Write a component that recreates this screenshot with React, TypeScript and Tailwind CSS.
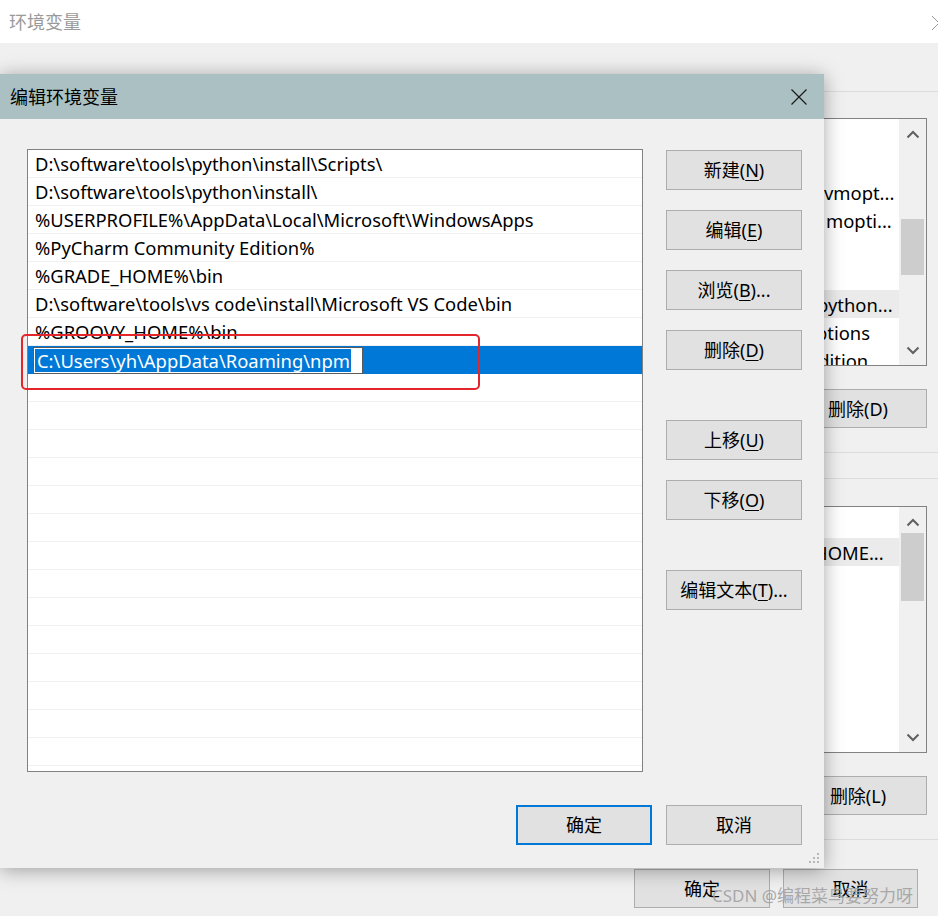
import React from 'react';

const PATHS = [
  'D:\\software\\tools\\python\\install\\Scripts\\',
  'D:\\software\\tools\\python\\install\\',
  '%USERPROFILE%\\AppData\\Local\\Microsoft\\WindowsApps',
  '%PyCharm Community Edition%',
  '%GRADE_HOME%\\bin',
  'D:\\software\\tools\\vs code\\install\\Microsoft VS Code\\bin',
  '%GROOVY_HOME%\\bin',
];
const SELECTED = 'C:\\Users\\yh\\AppData\\Roaming\\npm';

// fragments of the background window's list that peek out beside the dialog
const BG_ROWS_1: { text: string; pad: number; hl?: boolean }[] = [
  { text: '', pad: 0 },
  { text: '', pad: 0 },
  { text: 'vmopt...', pad: 223 },
  { text: 'mopti...', pad: 225 },
  { text: '', pad: 0 },
  { text: '', pad: 0 },
  { text: 'python...', pad: 216, hl: true },
  { text: 'ptions', pad: 215 },
  { text: 'Edition', pad: 207 },
];
const BG_ROWS_2: { text: string; pad: number; hl?: boolean }[] = [
  { text: '', pad: 0 },
  { text: 'HOME...', pad: 213, hl: true },
];

function Chevron({ down }: { down?: boolean }) {
  return (
    <svg width="14" height="9" viewBox="0 0 14 9" className={down ? 'rotate-180' : ''}>
      <path d="M1.5 7.5 L7 2 L12.5 7.5" fill="none" stroke="#606060" strokeWidth="2" />
    </svg>
  );
}

function ScrollBar({ thumbTop, thumbHeight }: { thumbTop: number; thumbHeight: number }) {
  return (
    <div className="w-[27px] shrink-0 bg-[#f0f0f0] flex flex-col">
      <div className="h-[30px] flex items-center justify-center">
        <Chevron />
      </div>
      <div className="flex-1 px-[2px]">
        <div className="bg-[#cdcdcd]" style={{ marginTop: thumbTop, height: thumbHeight }} />
      </div>
      <div className="h-[30px] flex items-center justify-center">
        <Chevron down />
      </div>
    </div>
  );
}

function BgList({ rows, top, height, thumbTop, thumbHeight }: {
  rows: { text: string; pad: number; hl?: boolean }[];
  top: number; height: number; thumbTop: number; thumbHeight: number;
}) {
  return (
    <div className="ml-[600px] mr-[11px] border border-[#828282] bg-white flex" style={{ marginTop: top, height }}>
      <div className="flex-1 pt-[3px] overflow-hidden">
        {rows.map((r, i) => (
          <div
            key={i}
            className={`h-[28px] flex items-center pt-[2px] whitespace-nowrap text-[18.4px] text-black ${r.hl ? 'bg-[#ebebeb]' : ''}`}
            style={{ paddingLeft: r.pad }}
          >
            {r.text}
          </div>
        ))}
      </div>
      <ScrollBar thumbTop={thumbTop} thumbHeight={thumbHeight} />
    </div>
  );
}

function BgButton({ label, className = '' }: { label: string; className?: string }) {
  return (
    <div className={`h-[39px] bg-[#e1e1e1] border border-[#adadad] flex items-center justify-center text-[18px] text-black ${className}`}>
      {label}
    </div>
  );
}

function BackgroundWindow() {
  return (
    <div className="flex flex-col">
      <div className="h-[43px] bg-white flex items-center justify-between pl-[9px]">
        <span className="text-[18px] text-[#9a9a9a]">环境变量</span>
        <svg width="16" height="16" viewBox="0 0 16 16" className="-mr-[9px] mt-[2px]">
          <path d="M1 1 L15 15 M15 1 L1 15" stroke="#9a9a9a" strokeWidth="1" fill="none" />
        </svg>
      </div>
      <div className="mt-[48px] h-px bg-[#dcdcdc]" />
      <BgList rows={BG_ROWS_1} top={26} height={248} thumbTop={70} thumbHeight={56} />
      <div className="flex justify-end mr-[11px] mt-[23px]">
        <BgButton label="删除(D)" className="w-[138px]" />
      </div>
      <div className="mt-[24px] h-px bg-[#dcdcdc]" />
      <div className="mt-[25px] h-px bg-[#dcdcdc]" />
      <BgList rows={BG_ROWS_2} top={27} height={247} thumbTop={-4} thumbHeight={68} />
      <div className="flex justify-end mr-[11px] mt-[23px]">
        <BgButton label="删除(L)" className="w-[138px]" />
      </div>
      <div className="mt-[24px] h-px bg-[#dcdcdc]" />
      <div className="flex justify-end gap-[13px] pr-[20px] mt-[29px]">
        <BgButton label="确定" className="w-[136px] h-[37px]" />
        <BgButton label="取消" className="w-[135px] h-[37px]" />
      </div>
    </div>
  );
}

function DlgButton({ label, keyChar, suffix = '', className = '', primary }: {
  label: string; keyChar?: string; suffix?: string; className?: string; primary?: boolean;
}) {
  return (
    <button
      className={`w-[136px] h-[40px] bg-[#e1e1e1] flex items-center justify-center text-[18px] text-black ${primary ? 'border-2 border-[#0078d7]' : 'border border-[#adadad]'} ${className}`}
    >
      {label}
      {keyChar && (
        <>
          (<span className="underline underline-offset-[3px] decoration-1">{keyChar}</span>){suffix}
        </>
      )}
    </button>
  );
}

function EditDialog() {
  const empty = Array.from({ length: 15 });
  return (
    <div className="absolute left-0 top-[74px] w-[824px] h-[794px] bg-[#f0f0f0] shadow-[0_2px_18px_rgba(0,0,0,0.35)] flex flex-col">
      <div className="h-[45px] bg-[#abc0c3] flex items-center justify-between pl-[10px] pr-[17px] shrink-0">
        <span className="text-[18px] text-black">编辑环境变量</span>
        <svg width="16" height="16" viewBox="0 0 16 16">
          <path d="M0.5 0.5 L15.5 15.5 M15.5 0.5 L0.5 15.5" stroke="#1a1a1a" strokeWidth="1.2" fill="none" />
        </svg>
      </div>

      <div className="flex pt-[30px] pl-[27px]">
        <div className="w-[616px] h-[623px] border border-[#828282] bg-white overflow-hidden">
          {PATHS.map(p => (
            <div key={p} className="h-[28px] border-b border-[#f0f0f0] flex items-center pt-[2px] pl-[7px] whitespace-nowrap text-[18.4px] text-black">
              {p}
            </div>
          ))}
          <div className="h-[28px] bg-[#0078d7] flex items-end pl-[5px]">
            <div className="w-[330px] h-[27px] bg-white border border-[#5a5a5a] flex items-center pl-[1px]">
              <span className="bg-[#0078d7] text-white text-[18.4px] whitespace-nowrap h-[23px] flex items-center pt-[2px] pl-[2px] pr-[1px]">
                {SELECTED}
              </span>
            </div>
          </div>
          {empty.map((_, i) => (
            <div key={i} className="h-[28px] border-b border-[#f0f0f0]" />
          ))}
        </div>

        <div className="ml-[23px] pt-[1px] flex flex-col">
          <DlgButton label="新建" keyChar="N" />
          <DlgButton label="编辑" keyChar="E" className="mt-[20px]" />
          <DlgButton label="浏览" keyChar="B" suffix="..." className="mt-[20px]" />
          <DlgButton label="删除" keyChar="D" className="mt-[20px]" />
          <DlgButton label="上移" keyChar="U" className="mt-[50px]" />
          <DlgButton label="下移" keyChar="O" className="mt-[20px]" />
          <DlgButton label="编辑文本" keyChar="T" suffix="..." className="mt-[50px]" />
        </div>
      </div>

      <div className="flex justify-end gap-[14px] pr-[22px] mt-[33px]">
        <DlgButton label="确定" primary className="h-[39px]" />
        <DlgButton label="取消" className="h-[39px]" />
      </div>

      <svg width="14" height="14" viewBox="0 0 14 14" className="absolute right-[3px] bottom-[3px]">
        <g fill="#b8b8b8">
          <rect x="10" y="2" width="2" height="2" />
          <rect x="6" y="6" width="2" height="2" />
          <rect x="10" y="6" width="2" height="2" />
          <rect x="2" y="10" width="2" height="2" />
          <rect x="6" y="10" width="2" height="2" />
          <rect x="10" y="10" width="2" height="2" />
        </g>
      </svg>
    </div>
  );
}

export default function App() {
  return (
    <div className="relative w-[938px] h-[916px] overflow-hidden bg-[#f0f0f0] font-['Noto_Sans','Noto_Sans_CJK_SC',sans-serif] leading-none">
      <BackgroundWindow />
      <EditDialog />
      {/* red annotation box */}
      <div className="absolute left-[21px] top-[334px] w-[459px] h-[56px] border-2 border-[#e3262b] rounded-[5px]" />
      <div className="absolute left-[712px] top-[887px] text-[17px] text-[#a0a0a0]/90 whitespace-nowrap">
        CSDN @编程菜鸟要努力呀
      </div>
    </div>
  );
}
